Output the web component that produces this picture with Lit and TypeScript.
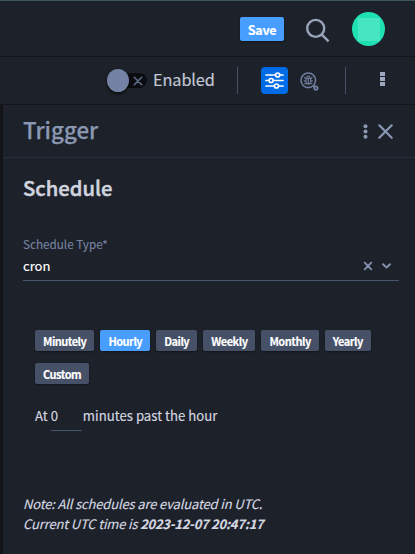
import { LitElement, html, css, svg } from "lit";
import { customElement, state } from "lit/decorators.js";
import { classMap } from "lit/directives/class-map.js";

const FREQUENCIES = ["Minutely", "Hourly", "Daily", "Weekly", "Monthly", "Yearly", "Custom"];

const cross = (size: number, inset: number, width: number) => html`
  <svg width=${size} height=${size} viewBox="0 0 ${size} ${size}" fill="none" stroke="currentColor" stroke-width=${width} stroke-linecap="round">
    ${svg`<path d="M${inset} ${inset}L${size - inset} ${size - inset}M${size - inset} ${inset}L${inset} ${size - inset}" />`}
  </svg>`;

@customElement("app-root")
export class AppRoot extends LitElement {
  @state() private frequency = "Hourly";

  static styles = css`
    :host {
      display: flex;
      flex-direction: column;
      box-sizing: border-box;
      height: 554px;
      overflow: hidden;
      background: #1d2129;
      color: #d5d8e1;
      font-family: "Noto Sans CJK SC", "Noto Sans", sans-serif;
      font-size: 13px;
      line-height: 20px;
      -webkit-text-stroke: 0.15px currentColor;
    }
    * { box-sizing: border-box; }
    svg { display: block; flex: none; }
    .topbar {
      display: flex;
      align-items: center;
      flex: none;
      height: 57px;
      padding: 1px 0 0 240px;
      border-top: 1px solid #435560;
      border-bottom: 1px solid #12151b;
    }
    .save {
      width: 44px;
      height: 24px;
      border-radius: 2px;
      background: #489eff;
      color: #fff;
      font-weight: 700;
      font-size: 12.6px;
      letter-spacing: -0.3px;
      line-height: 25px;
      text-align: center;
      box-shadow: 0 1px 2px #0006;
    }
    .search { margin: 2px 0 0 21px; color: #9aa4bd; }
    .avatar {
      display: flex;
      align-items: center;
      justify-content: center;
      width: 33px;
      height: 34px;
      margin-left: 22px;
      border-radius: 50%;
      background: #1fe0b3;
    }
    .avatar-tile { width: 22px; height: 23px; background: #46e6c2; }
    .toolbar {
      display: flex;
      align-items: center;
      flex: none;
      height: 48px;
      padding-left: 107px;
      border-bottom: 1px solid #12151b;
    }
    .toggle { display: flex; align-items: center; }
    .knob {
      width: 22px;
      height: 23px;
      border-radius: 50%;
      background: #7483a5;
      box-shadow: 0 2px 3px #000a;
      z-index: 1;
    }
    .track {
      display: flex;
      align-items: center;
      justify-content: flex-end;
      width: 29px;
      height: 15px;
      margin-left: -11px;
      padding-right: 4px;
      border-radius: 0 8px 8px 0;
      background: #0b0c10;
      color: #626f8e;
    }
    .enabled {
      width: 90px;
      margin-top: -3px;
      padding-left: 6px;
      font-size: 16.3px;
      letter-spacing: -0.1px;
      line-height: 24px;
      white-space: nowrap;
      color: #c3c8d6;
    }
    .rule { width: 1px; height: 27px; background: #465067; }
    .settings {
      display: flex;
      align-items: center;
      justify-content: center;
      width: 27px;
      height: 27px;
      margin-left: 23px;
      border-radius: 4px;
      background: #006be6;
      color: #fff;
    }
    .inspect { margin: 2px 26px 0 12px; color: #6f7c9b; }
    .more { display: grid; gap: 1px; margin: -3px 0 0 34px; }
    .more-dot { width: 5px; height: 4px; background: #9ea7bd; }
    .panel {
      flex: 1;
      border-left: 3px solid #121418;
    }
    .head {
      display: flex;
      align-items: center;
      height: 53px;
      padding: 0 22px 0 20px;
      border-bottom: 1px solid #292e3d;
      color: #8b98b4;
    }
    .title { flex: 1; margin-top: -4px; font-size: 22.3px; line-height: 30px; font-weight: 500; -webkit-text-stroke-width: 0.25px; }
    .kebab { margin-right: 10px; }
    .content { padding: 14px 16px 0 20px; }
    .section { font-size: 20.2px; line-height: 32px; font-weight: 500; color: #d0d4df; -webkit-text-stroke-width: 0.5px; }
    .label { margin-top: 31px; font-size: 11.7px; line-height: 18px; color: #7582a0; }
    .select {
      display: flex;
      align-items: center;
      height: 28px;
      padding: 0 7px 1px 0;
      border-bottom: 1px solid #465470;
      color: #8490ae;
    }
    .value { flex: 1; margin-top: -1px; color: #fff; }
    .clear { margin-right: 8px; }
    .choices {
      display: flex;
      flex-wrap: wrap;
      gap: 12px 6px;
      width: 350px;
      margin: 49px 0 0 12px;
    }
    .choice {
      height: 21px;
      padding: 0 8px;
      border-radius: 2px;
      background: #465067;
      box-shadow: 0 1px 2px #0006;
      color: #fff;
      font-size: 11px;
      letter-spacing: -0.5px;
      line-height: 22px;
      font-weight: 700;
      white-space: nowrap;
    }
    .choice.on { background: #489eff; }
    .interval { display: flex; margin: 22px 0 0 12px; font-size: 13.2px; }
    .minutes { width: 31px; height: 25px; margin: 0 1px 0 3px; border-bottom: 1px solid #465470; }
    .note { margin-top: 63px; font-style: italic; letter-spacing: -0.15px; white-space: nowrap; }
    .clock { letter-spacing: -0.27px; }
  `;

  render() {
    return html`
      <div class="topbar">
        <div class="save">Save</div>
        <svg class="search" width="25" height="25" viewBox="0 0 25 25" fill="none" stroke="currentColor" stroke-width="2.4">
          <circle cx="10.7" cy="10.4" r="8.5" /><path d="M16.8 16.6L23.6 23.3" />
        </svg>
        <div class="avatar"><div class="avatar-tile"></div></div>
      </div>
      <div class="toolbar">
        <div class="toggle">
          <div class="knob"></div>
          <div class="track">${cross(10, 1.3, 1.5)}</div>
          <div class="enabled">Enabled</div>
        </div>
        <div class="rule"></div>
        <div class="settings">
          <svg width="19" height="17" viewBox="0 0 19 17" fill="none" stroke="currentColor" stroke-width="1.7" stroke-linecap="round">
            <path d="M1 3H10.3M15 3H18M1 8.5H4M8.2 8.5H18M1 14H9.3M13.7 14H18" />
            <circle cx="12.7" cy="3" r="2" /><circle cx="6.1" cy="8.5" r="2" /><circle cx="11.5" cy="14" r="2" />
          </svg>
        </div>
        <svg class="inspect" width="19" height="19" viewBox="0 0 19 19" fill="none" stroke="currentColor" stroke-width="1.6">
          <circle cx="8.3" cy="8.3" r="7.3" /><path d="M13.3 13.3L14.8 14.8" stroke-width="2.4" /><circle cx="15.9" cy="16.1" r="1.7" stroke-width="1.8" />
          <path d="M6.6 5.5C6.8 3.7 9.8 3.7 10 5.5M5.9 6.3H10.7V9.8C10.7 12.8 5.9 12.8 5.9 9.8ZM8.3 6.6V11.8M4.2 5.1L5.8 6.7M12.4 5.1L10.8 6.7M3.8 8.8H5.8M10.8 8.8H12.8M4.3 12.1L6.1 10.6M12.3 12.1L10.5 10.6" stroke-width="1.2" />
        </svg>
        <div class="rule"></div>
        <div class="more"><div class="more-dot"></div><div class="more-dot"></div><div class="more-dot"></div></div>
      </div>
      <div class="panel">
        <div class="head">
          <div class="title">Trigger</div>
          <svg class="kebab" width="5" height="15" viewBox="0 0 5 15" fill="currentColor">
            <circle cx="2.5" cy="2.2" r="2" /><circle cx="2.5" cy="7.5" r="2" /><circle cx="2.5" cy="12.8" r="2" />
          </svg>
          ${cross(15, 1.3, 2.2)}
        </div>
        <div class="content">
          <div class="section">Schedule</div>
          <div class="label">Schedule Type*</div>
          <div class="select">
            <span class="value">cron</span>
            <span class="clear">${cross(10, 1.7, 1.9)}</span>
            <svg width="11" height="10" viewBox="0 0 11 10" fill="none" stroke="currentColor" stroke-width="1.9" stroke-linecap="round" stroke-linejoin="round">
              <path d="M2 3.2L5.5 6.5L9 3.2" />
            </svg>
          </div>
          <div class="choices">
            ${FREQUENCIES.map(
              (name) => html`<div
                class=${classMap({ choice: true, on: name === this.frequency })}
                @click=${() => (this.frequency = name)}
              >${name}</div>`
            )}
          </div>
          <div class="interval">
            <span>At</span><span class="minutes">0</span><span>minutes past the hour</span>
          </div>
          <div class="note">
            Note: All schedules are evaluated in UTC.<br />
            Current UTC time is <b class="clock">2023-12-07 20:47:17</b>
          </div>
        </div>
      </div>
    `;
  }
}
